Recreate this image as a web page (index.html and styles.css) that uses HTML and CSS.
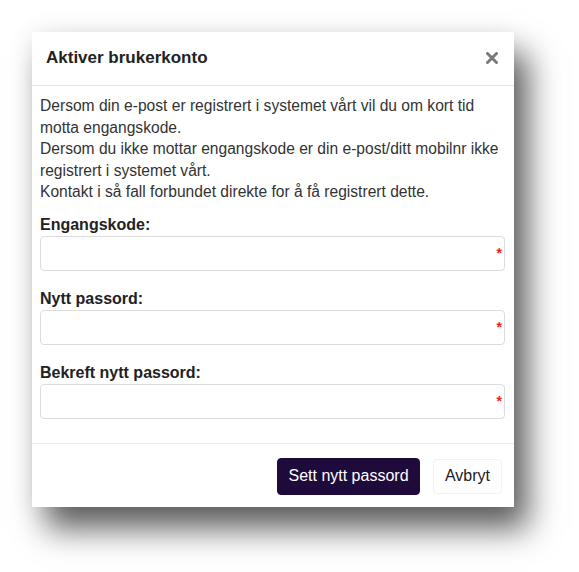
FILE: index.html
```html
<!DOCTYPE html>
<html lang="no">
<head>
<meta charset="utf-8">
<title>Aktiver brukerkonto</title>
<link rel="stylesheet" href="styles.css">
</head>
<body>
<div class="page">
  <div class="dialog">
    <div class="header">
      <h1 class="title">Aktiver brukerkonto</h1>
      <svg class="close" width="12" height="12" viewBox="0 0 12 12" aria-label="Lukk">
        <path d="M1.5 1.5 L10.5 10.5 M10.5 1.5 L1.5 10.5" stroke="#7a7a7a" stroke-width="3" stroke-linecap="round"/>
      </svg>
    </div>
    <div class="body">
      <p class="info">Dersom din e-post er registrert i systemet vårt vil du om kort tid motta engangskode.<br>Dersom du ikke mottar engangskode er din e-post/ditt mobilnr ikke registrert i systemet vårt.<br>Kontakt i så fall forbundet direkte for å få registrert dette.</p>
      <div class="field">
        <label class="label">Engangskode:</label>
        <div class="input-wrap"><div class="input"></div><span class="req">*</span></div>
      </div>
      <div class="field">
        <label class="label">Nytt passord:</label>
        <div class="input-wrap"><div class="input"></div><span class="req">*</span></div>
      </div>
      <div class="field">
        <label class="label">Bekreft nytt passord:</label>
        <div class="input-wrap"><div class="input"></div><span class="req">*</span></div>
      </div>
    </div>
    <div class="footer">
      <button class="btn btn-primary">Sett nytt passord</button>
      <button class="btn btn-default">Avbryt</button>
    </div>
  </div>
</div>
</body>
</html>
```

FILE: styles.css
```css
* { box-sizing: border-box; }
html, body { margin: 0; padding: 0; background: #ffffff; }
body { font-family: "Liberation Sans", Arial, sans-serif; color: #333333; }
.page { padding: 32px 0 65px 32px; min-height: 572px; }
.dialog {
  width: 482px;
  background: #ffffff;
  box-shadow: 0 0 24px rgba(0,0,0,0.07), 14px 22px 30px rgba(0,0,0,0.62);
}
.header {
  height: 54px;
  border-bottom: 1px solid #e8e8e8;
  display: flex;
  align-items: center;
  justify-content: space-between;
  padding: 0 16px 1px 14px;
}
.title {
  margin: 0;
  font-size: 17px;
  font-weight: bold;
  color: #222222;
}
.close { display: block; }
.body { padding: 9px 9px 24px 8px; }
.info {
  margin: 0 0 11px 0;
  font-size: 15.6px;
  line-height: 21.5px;
  color: #333333;
}
.field { margin-bottom: 17px; }
.field:last-child { margin-bottom: 0; }
.label {
  display: block;
  font-size: 16px;
  font-weight: bold;
  line-height: 22px;
  color: #222222;
}
.input-wrap { position: relative; }
.input {
  height: 35px;
  border: 1px solid #dcdcdf;
  border-radius: 4px;
  background: #ffffff;
}
.req {
  position: absolute;
  right: 3px;
  top: 10px;
  color: #ee2222;
  font-size: 14px;
  font-weight: bold;
  line-height: 14px;
}
.footer {
  border-top: 1px solid #ececec;
  display: flex;
  justify-content: flex-end;
  align-items: center;
  gap: 13px;
  padding: 14px 12px 12px 0;
}
.btn {
  font-family: "Liberation Sans", Arial, sans-serif;
  font-size: 16px;
  border-radius: 4px;
  cursor: pointer;
}
.btn-primary {
  height: 37px;
  width: 143px;
  background: #1e0b3c;
  color: #ffffff;
  border: 1px solid #1e0b3c;
}
.btn-default {
  height: 35px;
  width: 69px;
  background: #ffffff;
  color: #222222;
  border: 1px solid #f2f2f2;
}
```
